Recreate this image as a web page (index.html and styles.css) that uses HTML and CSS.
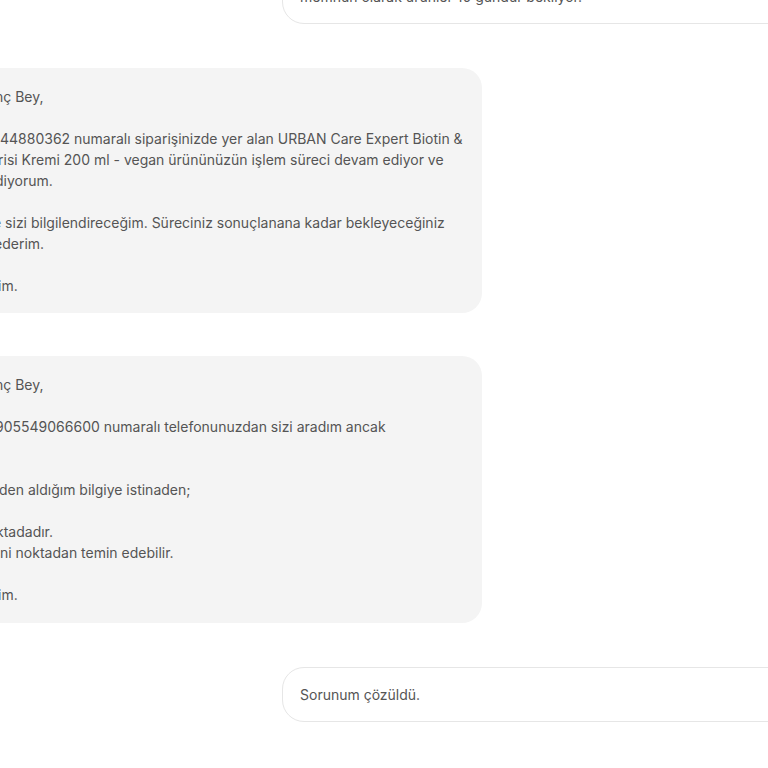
FILE: index.html
```html
<!DOCTYPE html>
<html lang="tr">
<head>
<meta charset="utf-8">
<title>Sohbet</title>
<link rel="stylesheet" href="styles.css">
</head>
<body>
<div class="viewport">
  <div class="chat">
    <div class="msg user">
      <div class="line">memnun olarak ürünler 10 gündür bekliyor.</div>
    </div>
    <div class="msg agent">
      <div class="line cut-5">nç Bey,</div>
      <div class="line">&nbsp;</div>
      <div class="line">44880362 numaralı siparişinizde yer alan URBAN Care Expert Biotin &amp;</div>
      <div class="line cut-2">risi Kremi 200 ml - vegan ürününüzün işlem süreci devam ediyor ve</div>
      <div class="line cut-5">diyorum.</div>
      <div class="line">&nbsp;</div>
      <div class="line cut-7">e sizi bilgilendireceğim. Süreciniz sonuçlanana kadar bekleyeceğiniz</div>
      <div class="line cut-6">ederim.</div>
      <div class="line">&nbsp;</div>
      <div class="line cut-2">im.</div>
    </div>
    <div class="msg agent">
      <div class="line cut-5">nç Bey,</div>
      <div class="line">&nbsp;</div>
      <div class="line cut-5">905549066600 numaralı telefonunuzdan sizi aradım ancak</div>
      <div class="line">&nbsp;</div>
      <div class="line">&nbsp;</div>
      <div class="line cut-1">den aldığım bilgiye istinaden;</div>
      <div class="line">&nbsp;</div>
      <div class="line cut-4">ktadadır.</div>
      <div class="line">ni noktadan temin edebilir.</div>
      <div class="line">&nbsp;</div>
      <div class="line cut-2">im.</div>
    </div>
    <div class="msg user">
      <div class="line">Sorunum çözüldü.</div>
    </div>
  </div>
</div>
</body>
</html>
```
FILE: styles.css
```css
html, body {
  margin: 0;
  padding: 0;
  background: #ffffff;
}
.viewport {
  width: 768px;
  height: 768px;
  overflow: hidden;
}
.chat {
  display: flex;
  flex-direction: column;
  gap: 44px;
  margin-top: -31px;
  font-family: "Inter", "Liberation Sans", sans-serif;
  font-size: 14px;
  line-height: 21px;
  color: #555555;
}
.msg {
  box-sizing: border-box;
}
.line {
  white-space: nowrap;
}
.cut-1 { margin-left: -1px; }
.cut-2 { margin-left: -2px; }
.cut-4 { margin-left: -4px; }
.cut-5 { margin-left: -5px; }
.cut-6 { margin-left: -6px; }
.cut-7 { margin-left: -7px; }
.agent {
  align-self: flex-start;
  margin-left: -18px;
  width: 500px;
  padding: 17.5px 18px;
  background: #f4f4f4;
  border-radius: 20px;
}
.agent + .agent {
  margin-top: -1px;
  padding-top: 18px;
  padding-bottom: 18px;
}
.user {
  margin-left: 282px;
  width: 640px;
  background: #ffffff;
  border: 1px solid #e6e6e6;
  border-radius: 22px;
  padding: 16px 17px;
}
```
